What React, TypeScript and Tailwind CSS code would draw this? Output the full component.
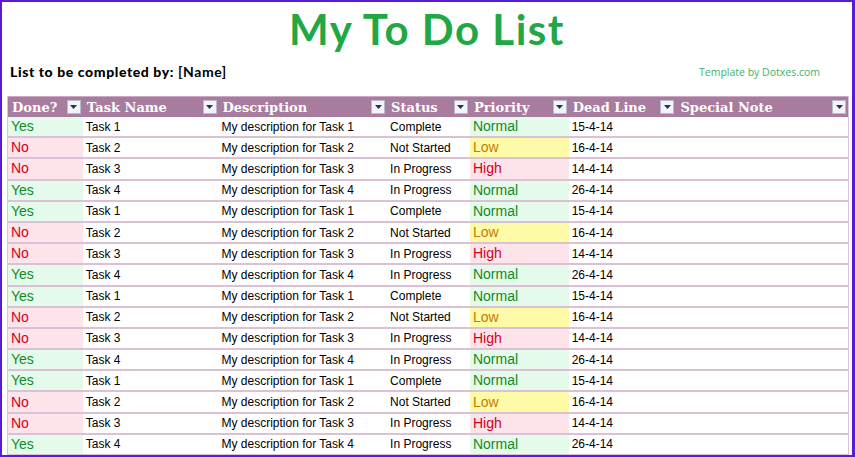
import React from "react";

type Row = { done: boolean; task: string; status: string; prio: "Normal" | "Low" | "High"; date: string };

const base: Row[] = [
  { done: true, task: "Task 1", status: "Complete", prio: "Normal", date: "15-4-14" },
  { done: false, task: "Task 2", status: "Not Started", prio: "Low", date: "16-4-14" },
  { done: false, task: "Task 3", status: "In Progress", prio: "High", date: "14-4-14" },
  { done: true, task: "Task 4", status: "In Progress", prio: "Normal", date: "26-4-14" },
];
const rows: Row[] = [...base, ...base, ...base, ...base];

function FilterBtn() {
  return (
    <div className="w-[14px] h-[14px] bg-[#f3f3fa] border border-[#b9b9d2] flex items-center justify-center shrink-0">
      <svg width="7" height="4" viewBox="0 0 7 4">
        <polygon points="0,0 7,0 3.5,4" fill="#26305c" />
      </svg>
    </div>
  );
}

function HeadCell({ name, w }: { name: string; w: string }) {
  return (
    <div className={`${w} flex items-center justify-between pl-[4px] pr-[2px]`}>
      <span className="text-white text-[13px] font-bold leading-none font-['DejaVu_Serif',serif]">{name}</span>
      <FilterBtn />
    </div>
  );
}

const prioStyle: Record<string, string> = {
  Normal: "bg-[#e4fbec] text-[#12891f]",
  Low: "bg-[#fefba8] text-[#c77a00]",
  High: "bg-[#fde3ea] text-[#d2001c]",
};

export default function App() {
  return (
    <div className="w-[855px] h-[457px] border-l-2 border-t-2 border-b-2 border-r-[3px] border-[#5a1bd6] bg-white relative overflow-hidden box-border">
      <div className="h-[52px] flex justify-center items-center pt-[1px]">
        <div className="text-[#21a845] text-[42px] leading-none font-bold tracking-[1.5px] font-[Lato,sans-serif]">
          My To Do List
        </div>
      </div>
      <div className="h-[42px] flex items-start justify-between pl-[8px] pr-[32px] pt-[7px]">
        <div className="text-[14px] font-black tracking-[0.6px] text-black font-[Lato,sans-serif]">
          List to be completed by: <span className="font-bold">[Name]</span>
        </div>
        <div className="text-[10.5px] text-[#3bb36a] pt-[4px] font-['Open_Sans',sans-serif]">
          Template by Dotxes.com
        </div>
      </div>
      <div className="ml-[5px] w-[842px] border-x border-[#dcc0d4]">
        <div className="flex h-[21px] bg-[#a87c9e] border-t border-[#cba9c2]">
          <HeadCell name="Done?" w="w-[75px]" />
          <HeadCell name="Task Name" w="w-[136px]" />
          <HeadCell name="Description" w="w-[169px]" />
          <HeadCell name="Status" w="w-[83px]" />
          <HeadCell name="Priority" w="w-[99px]" />
          <HeadCell name="Dead Line" w="w-[108px]" />
          <HeadCell name="Special Note" w="w-[172px]" />
        </div>
        {rows.map((r, i) => (
          <div key={i} className="flex h-[21.2px] border-b-2 border-[#dcc0d4] text-[12px] text-black font-['Liberation_Sans',Arial,sans-serif]">
            <div
              className={`w-[75px] flex items-center pl-[3px] text-[14px] ${r.done ? "bg-[#e4fbec] text-[#12891f]" : "bg-[#fde3ea] text-[#d2001c]"}`}
            >
              {r.done ? "Yes" : "No"}
            </div>
            <div className="w-[136px] flex items-center pl-[3px]">{r.task}</div>
            <div className="w-[169px] flex items-center pl-[3px]">My description for {r.task}</div>
            <div className="w-[83px] flex items-center pl-[3px]">{r.status}</div>
            <div className={`w-[99px] flex items-center pl-[3px] text-[14px] ${prioStyle[r.prio]}`}>{r.prio}</div>
            <div className="w-[108px] flex items-center pl-[3px]">{r.date}</div>
            <div className="w-[172px]" />
          </div>
        ))}
      </div>
    </div>
  );
}
